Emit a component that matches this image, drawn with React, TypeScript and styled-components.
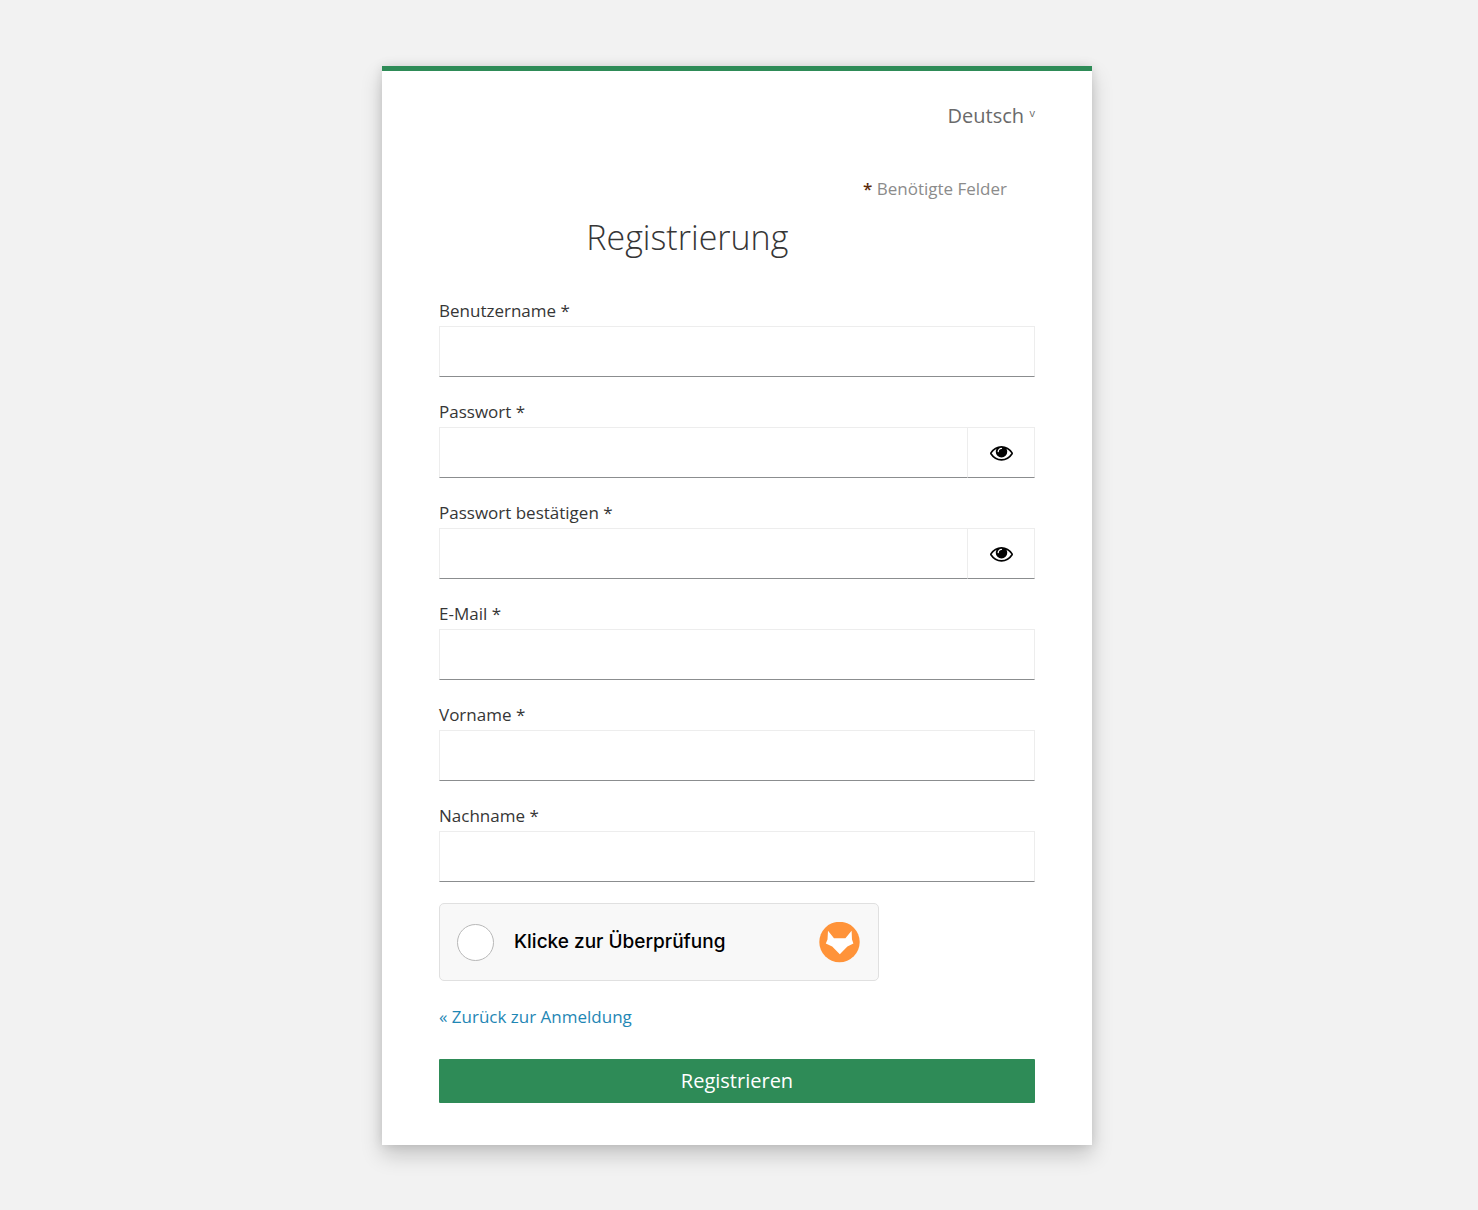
import React, { useState } from "react";
import styled, { createGlobalStyle } from "styled-components";

const GlobalStyle = createGlobalStyle`
  *, *::before, *::after { box-sizing: border-box; }
  body {
    margin: 0;
    background: #f2f2f2;
    color: #363636;
    font-family: "Open Sans", "Noto Sans", sans-serif;
    font-size: 17px;
    line-height: 24px;
  }
  button, input, select { font: inherit; color: inherit; }
`;

const Page = styled.div`
  display: flex;
  justify-content: center;
  align-items: flex-start;
  min-height: 100vh;
  padding: 66px 4px 64px 0;
`;

const Card = styled.main`
  width: 100%;
  max-width: 710px;
  padding: 30px 57px 42px;
  background: #fff;
  border-top: 5px solid #2e8b57;
  box-shadow: 0 10px 20px rgba(3, 3, 3, 0.19), 0 0 10px rgba(3, 3, 3, 0.1);
`;

const LanguageBar = styled.div`
  display: flex;
  justify-content: flex-end;
  align-items: flex-start;
  gap: 5px;
  color: #6a6a6a;
`;

const LanguageSelect = styled.select`
  appearance: none;
  margin: 0;
  padding: 0;
  border: 0;
  background: transparent;
  font-size: 20px;
  line-height: 30px;
  cursor: pointer;
`;

const Caret = styled.span`
  font-size: 11px;
  line-height: 24px;
`;

const RequiredNote = styled.p`
  margin: 46px 28px 0 0;
  text-align: right;
  color: #8b8b8b;
`;

const RequiredMark = styled.span`
  color: #5c2b0c;
  font-weight: 600;
`;

const Title = styled.h1`
  width: 83.3333%;
  margin: 12px 0 39px;
  text-align: center;
  font-size: 34px;
  font-weight: 300;
  line-height: 48px;
`;

const Form = styled.form`
  display: flex;
  flex-direction: column;
`;

const Fields = styled.div`
  display: flex;
  flex-direction: column;
  gap: 24px;
`;

const Field = styled.div`
  display: flex;
  flex-direction: column;
  gap: 4px;
`;

const Label = styled.label`
  line-height: 22px;
`;

const InputGroup = styled.div`
  display: flex;
`;

const TextInput = styled.input`
  flex: 1;
  min-width: 0;
  height: 51px;
  padding: 4px 12px;
  border: 1px solid #ededed;
  border-bottom-color: #8b8d8f;
  border-radius: 0;
  background: #fff;
  outline-color: #2e8b57;
`;

const RevealButton = styled.button`
  display: grid;
  place-items: center;
  width: 68px;
  margin-left: -1px;
  padding: 0;
  border: 1px solid #ededed;
  border-bottom-color: #8b8d8f;
  background: #fff;
  color: #030303;
  cursor: pointer;
`;

const Captcha = styled.label`
  display: flex;
  align-items: center;
  gap: 20px;
  width: 100%;
  max-width: 440px;
  height: 78px;
  margin-top: 21px;
  padding: 0 18px 0 17px;
  border: 1px solid #e0e0e0;
  border-radius: 5px;
  background: #f8f8f8;
  color: #000;
  font-family: Inter, "Liberation Sans", sans-serif;
  font-size: 19px;
  font-weight: 500;
  cursor: pointer;
`;

const CaptchaCheck = styled.input`
  appearance: none;
  flex: none;
  width: 37px;
  height: 37px;
  margin: 0;
  border: 1px solid #b8b8b8;
  border-radius: 50%;
  background: #fff;

  &:checked {
    background: #2e8b57;
  }
`;

const CaptchaText = styled.span`
  flex: 1;
`;

const BackLink = styled.a`
  align-self: flex-start;
  margin-top: 24px;
  color: #1f87b5;
  text-decoration: none;
`;

const SubmitButton = styled.button`
  height: 44px;
  margin-top: 30px;
  padding: 0;
  border: 0;
  border-radius: 1px;
  background: #2e8b57;
  color: #fff;
  font-size: 20px;
  cursor: pointer;
`;

const EyeIcon = () => (
  <svg width="23" height="23" viewBox="0 0 1792 1792" fill="currentColor" aria-hidden="true">
    <path d="M1664 960q-152-236-381-353 61 104 61 225 0 185-131.5 316.5t-316.5 131.5-316.5-131.5-131.5-316.5q0-121 61-225-229 117-381 353 133 205 333.5 326.5t434.5 121.5 434.5-121.5 333.5-326.5zm-720-384q0-20-14-34t-34-14q-125 0-214.5 89.5t-89.5 214.5q0 20 14 34t34 14 34-14 14-34q0-86 61-147t147-61q20 0 34-14t14-34zm848 384q0 34-20 69-140 230-376.5 368.5t-499.5 138.5-499.5-139-376.5-368q-20-35-20-69t20-69q140-229 376.5-368t499.5-139 499.5 139 376.5 368q20 35 20 69z" />
  </svg>
);

const FoxLogo = () => (
  <svg width="41" height="41" viewBox="0 0 41 41" aria-hidden="true">
    <circle cx="20.5" cy="20" r="20.2" fill="#ff9339" />
    <path
      d="M9 8.8 L15 16.2 H26.4 L32.6 8.8 L33 17.6 L34.4 21.6 L28.4 24.4 L20.8 32.2 L13.2 24.4 L6.8 21.6 L8.5 17.6 Z"
      fill="#fff"
    />
  </svg>
);

type FieldSpec = { id: string; label: string; type: "text" | "email" | "password" };

const fields: FieldSpec[] = [
  { id: "username", label: "Benutzername", type: "text" },
  { id: "password", label: "Passwort", type: "password" },
  { id: "password-confirm", label: "Passwort bestätigen", type: "password" },
  { id: "email", label: "E-Mail", type: "email" },
  { id: "firstName", label: "Vorname", type: "text" },
  { id: "lastName", label: "Nachname", type: "text" },
];

function FormField({ id, label, type }: FieldSpec) {
  const [visible, setVisible] = useState(false);
  const secret = type === "password";
  return (
    <Field>
      <Label htmlFor={id}>{label} *</Label>
      <InputGroup>
        <TextInput id={id} name={id} type={secret && visible ? "text" : type} />
        {secret && (
          <RevealButton
            type="button"
            aria-label="Passwort anzeigen"
            aria-controls={id}
            onClick={() => setVisible(!visible)}
          >
            <EyeIcon />
          </RevealButton>
        )}
      </InputGroup>
    </Field>
  );
}

export default function App() {
  return (
    <>
      <GlobalStyle />
      <Page>
        <Card>
          <LanguageBar>
            <LanguageSelect aria-label="Sprache" defaultValue="de">
              <option value="de">Deutsch</option>
            </LanguageSelect>
            <Caret aria-hidden="true">v</Caret>
          </LanguageBar>
          <RequiredNote>
            <RequiredMark>*</RequiredMark> Benötigte Felder
          </RequiredNote>
          <Title>Registrierung</Title>
          <Form onSubmit={(event) => event.preventDefault()}>
            <Fields>
              {fields.map((field) => (
                <FormField key={field.id} {...field} />
              ))}
            </Fields>
            <Captcha>
              <CaptchaCheck type="checkbox" name="captcha" />
              <CaptchaText>Klicke zur Überprüfung</CaptchaText>
              <FoxLogo />
            </Captcha>
            <BackLink href="#login">« Zurück zur Anmeldung</BackLink>
            <SubmitButton type="submit">Registrieren</SubmitButton>
          </Form>
        </Card>
      </Page>
    </>
  );
}
